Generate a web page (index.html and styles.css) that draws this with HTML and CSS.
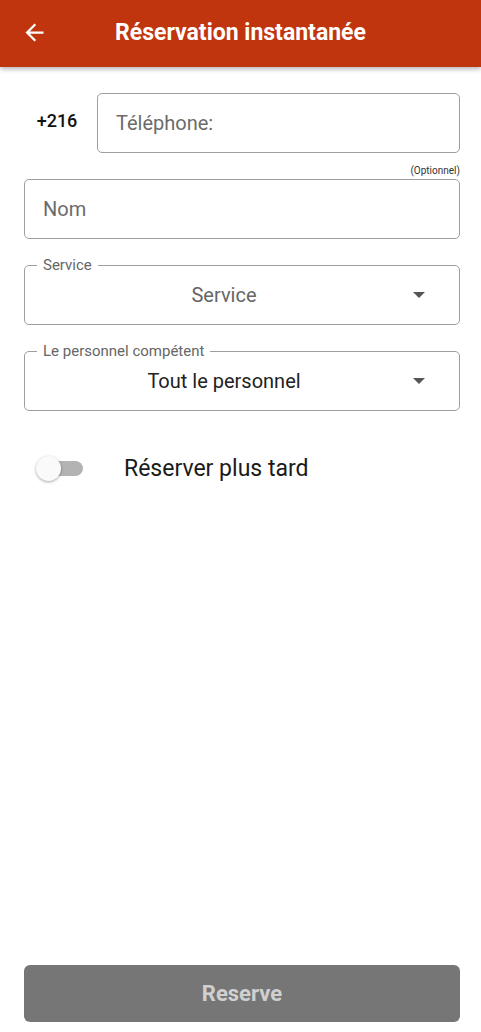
FILE: index.html
```html
<!DOCTYPE html>
<html lang="fr">
<head>
    <meta charset="UTF-8">
    <meta name="viewport" content="width=device-width, initial-scale=1.0">
    <title>Réservation instantanée</title>
    <link rel="stylesheet" href="styles.css">
</head>
<body>
    <div class="screen">
        <!-- App bar -->
        <header class="app-bar">
            <button class="back-btn" type="button" aria-label="Retour">
                <svg width="24" height="24" viewBox="0 0 24 24">
                    <path d="M20 11H7.83l5.59-5.59L12 4l-8 8 8 8 1.41-1.41L7.83 13H20v-2z" fill="#fff"/>
                </svg>
            </button>
            <h1>Réservation instantanée</h1>
        </header>

        <form class="form" id="reservationForm">
            <!-- Phone -->
            <div class="phone-row">
                <span class="prefix">+216</span>
                <div class="field phone-field">
                    <input type="tel" placeholder="Téléphone:">
                </div>
            </div>

            <!-- Name -->
            <div class="optional">(Optionnel)</div>
            <div class="field">
                <input type="text" placeholder="Nom">
            </div>

            <!-- Service -->
            <div class="field select-field">
                <span class="legend">Service</span>
                <span class="value muted">Service</span>
                <span class="caret"></span>
            </div>

            <!-- Staff -->
            <div class="field select-field">
                <span class="legend">Le personnel compétent</span>
                <span class="value">Tout le personnel</span>
                <span class="caret"></span>
            </div>

            <!-- Later switch -->
            <label class="switch-row">
                <span class="switch">
                    <span class="track"></span>
                    <span class="thumb"></span>
                </span>
                <span class="switch-label">Réserver plus tard</span>
            </label>

            <button class="submit" type="submit">Reserve</button>
        </form>
    </div>
</body>
</html>
```

FILE: styles.css
```css
* {
    box-sizing: border-box;
}

body {
    margin: 0;
    font-family: Roboto, "Noto Sans", Arial, sans-serif;
    background-color: #fff;
    color: #1f1f1f;
}

.screen {
    display: flex;
    flex-direction: column;
    height: 1032px;
}

.app-bar {
    height: 67px;
    flex-shrink: 0;
    background-color: #c1350e;
    display: flex;
    align-items: center;
    padding: 0 0 2px 21px;
    box-shadow: 0 2px 5px rgba(0, 0, 0, 0.3);
    position: relative;
    z-index: 1;
}

.back-btn {
    background: none;
    border: none;
    padding: 0;
    width: 27px;
    height: 27px;
    display: flex;
    align-items: center;
    justify-content: center;
}

.back-btn svg {
    width: 27px;
    height: 27px;
}

.app-bar h1 {
    flex: 1;
    margin: 0 0 0 -48px;
    text-align: center;
    color: #fff;
    font-size: 23px;
    font-weight: 700;
}

.form {
    flex: 1;
    display: flex;
    flex-direction: column;
    padding: 26px 21px 10px 24px;
}

.phone-row {
    display: flex;
    align-items: center;
}

.prefix {
    width: 73px;
    padding-right: 7px;
    padding-bottom: 6px;
    text-align: center;
    font-size: 18px;
    font-weight: 500;
    color: #111;
}

.field {
    position: relative;
    height: 60px;
    border: 1px solid #9e9e9e;
    border-radius: 5px;
    display: flex;
    align-items: center;
}

.phone-field {
    flex: 1;
}

.field input {
    width: 100%;
    height: 100%;
    border: none;
    background: none;
    outline: none;
    padding: 0 18px;
    font-family: inherit;
    font-size: 20px;
    color: #222;
}

.field input::placeholder {
    color: #6b6b6b;
}

.optional {
    text-align: right;
    font-size: 10px;
    color: #333;
    margin: 12px 0 2px;
    line-height: 12px;
}

.select-field {
    margin-top: 26px;
    justify-content: center;
    padding-right: 36px;
}

.legend {
    position: absolute;
    top: -9px;
    left: 12px;
    padding: 0 6px;
    background-color: #fff;
    font-size: 15px;
    line-height: 16px;
    color: #666;
}

.value {
    font-size: 20px;
    color: #222;
}

.value.muted {
    color: #666;
}

.caret {
    position: absolute;
    right: 34px;
    top: 26px;
    width: 0;
    height: 0;
    border-left: 6px solid transparent;
    border-right: 6px solid transparent;
    border-top: 6px solid #555;
}

.switch-row {
    display: flex;
    align-items: center;
    margin-top: 44px;
    padding-left: 12px;
}

.switch {
    position: relative;
    width: 48px;
    height: 26px;
    display: flex;
    align-items: center;
}

.track {
    display: block;
    width: 46px;
    height: 15px;
    margin-left: 1px;
    border-radius: 8px;
    background-color: #b3b3b3;
}

.thumb {
    position: absolute;
    left: 0;
    top: 0;
    width: 25px;
    height: 25px;
    border-radius: 50%;
    background-color: #fafafa;
    box-shadow: 0 1px 3px rgba(0, 0, 0, 0.35);
}

.switch-label {
    margin-left: 40px;
    font-size: 23px;
    color: #1a1a1a;
}

.submit {
    margin-top: auto;
    height: 57px;
    border: none;
    border-radius: 6px;
    background-color: #767676;
    color: #d0d0d0;
    font-family: inherit;
    font-size: 22px;
    font-weight: 700;
}
```
